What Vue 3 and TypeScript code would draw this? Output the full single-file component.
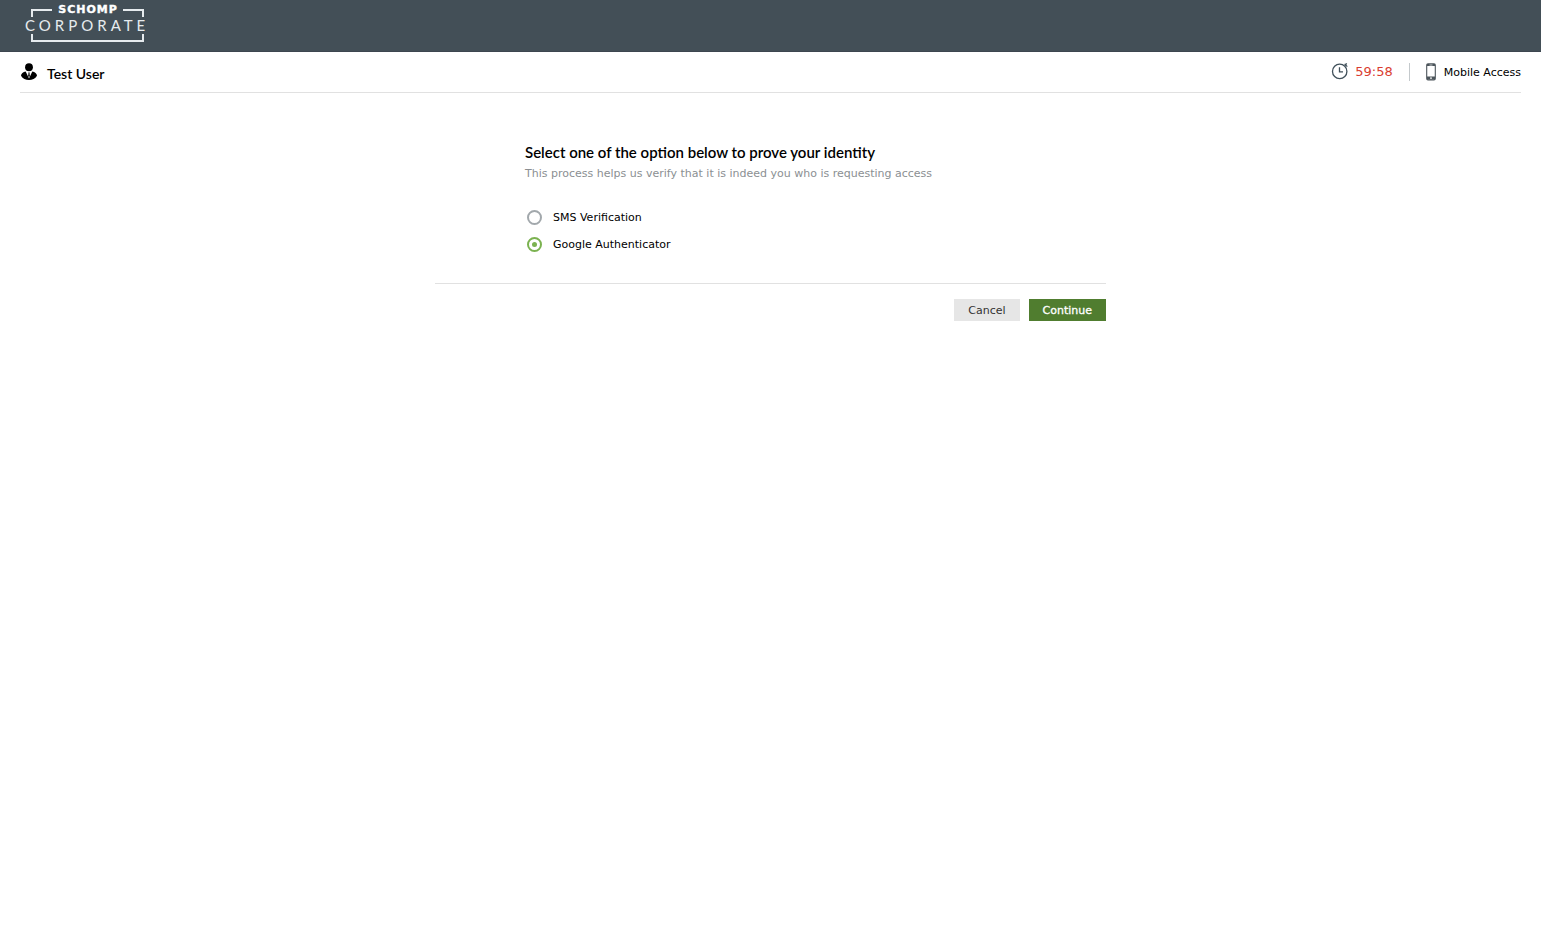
<script setup lang="ts">
import { ref } from 'vue'

interface Method {
  id: string
  label: string
}

const methods: Method[] = [
  { id: 'sms', label: 'SMS Verification' },
  { id: 'google', label: 'Google Authenticator' },
]
const selected = ref('google')
const remaining = ref('59:58')
</script>

<template>
  <div class="page">
    <header class="brand-bar">
      <svg class="logo" viewBox="0 0 126 38" role="img" aria-label="Schomp Corporate">
        <path d="M8 12V5H28M99 5H119V12M8 29V36H119V29" fill="none" stroke="#e6ebee" stroke-width="2" />
        <text class="logo-top" x="64" y="8" text-anchor="middle">SCHOMP</text>
        <text class="logo-name" x="1" y="26">CORPORATE</text>
      </svg>
    </header>

    <div class="user-bar">
      <div class="user">
        <svg class="user-icon" viewBox="0 0 18 18" aria-hidden="true">
          <ellipse cx="9" cy="4.2" rx="3.9" ry="4" />
          <path d="M1 12.700C1 10.400 3.200 9.100 5.700 8.500L9 15.500 12.300 8.500C14.800 9.100 17 10.400 17 12.700 15.200 15.600 12.400 17 9 17S2.800 15.600 1 12.700Z" />
          <path d="M8.200 9.500H9.800L9.500 10.700 9.900 12.700 9 14.500 8.100 12.700 8.500 10.700Z" />
        </svg>
        <span class="user-name">Test User</span>
      </div>
      <div class="tools">
        <div class="timer">
          <svg class="clock-icon" viewBox="0 0 18 18" aria-hidden="true" fill="none" stroke="#40505a">
            <circle cx="8.700" cy="8.400" r="7.200" stroke-width="1.300" />
            <path d="M8.500 4.300V8.900H12" stroke-width="1.300" />
            <path d="M13.600 0.900L16.300 3.600M15.700 0.400L14 2.500" stroke-width="1.300" />
          </svg>
          <span>{{ remaining }}</span>
        </div>
        <a class="mobile" href="#">
          <svg class="phone-icon" viewBox="0 0 10 18" aria-hidden="true">
            <rect x="0.700" y="0.700" width="8.600" height="16.200" rx="1.300" fill="#fff" stroke="#4c555b" stroke-width="1.100" />
            <path d="M1 1H9V3H1ZM1 13.600H9V16.600H1Z" fill="#4c555b" />
            <path d="M3.500 2H6.500" stroke="#fff" stroke-width="0.700" />
            <circle cx="5" cy="15.100" r="0.900" fill="#fff" />
          </svg>
          <span class="text">Mobile Access</span>
        </a>
      </div>
    </div>

    <main class="verify">
      <form @submit.prevent>
        <div class="content">
          <h1>Select one of the option below to prove your identity</h1>
          <p>This process helps us verify that it is indeed you who is requesting access</p>
          <div class="methods" role="radiogroup" aria-label="Verification method">
            <label v-for="m in methods" :key="m.id" class="method" :for="m.id">
              <input :id="m.id" v-model="selected" type="radio" name="method" :value="m.id" />
              <span class="text">{{ m.label }}</span>
            </label>
          </div>
        </div>
        <div class="actions">
          <button type="button" class="cancel">Cancel</button>
          <button type="submit" class="continue">Continue</button>
        </div>
      </form>
    </main>
  </div>
</template>

<style>
body {
  background: #fff;
}
</style>

<style scoped>
.page {
  font-family: Verdana, "DejaVu Sans", sans-serif;
  font-size: 11px;
  line-height: 16px;
  color: #000;
}
.brand-bar {
  box-sizing: border-box;
  height: 52px;
  padding: 5px 24px;
  background: #434f57;
  border-bottom: 1px solid #3d464f;
}
.logo {
  display: block;
  width: 126px;
  height: 38px;
  overflow: visible;
}
.logo-top {
  font: 700 11px "DejaVu Sans", sans-serif;
  letter-spacing: 1px;
  fill: #fff;
  stroke: #fff;
  stroke-width: 0.4px;
}
.logo-name {
  font: 400 15px Lato, sans-serif;
  letter-spacing: 4px;
  fill: #e6ebee;
}
.user-bar {
  display: flex;
  justify-content: space-between;
  align-items: center;
  box-sizing: border-box;
  height: 41px;
  margin: 0 20px;
  border-bottom: 1px solid #e1e1e1;
}
.user,
.tools,
.timer,
.mobile {
  display: flex;
  align-items: center;
}
.user-icon {
  width: 18px;
  height: 18px;
  margin-right: 9px;
}
.user-name {
  padding-top: 4px;
  font: 600 14px/18px Lato, sans-serif;
}
.text {
  padding-top: 2px;
}
.timer {
  gap: 6px;
  height: 18px;
  padding-right: 16px;
  border-right: 1px solid #c4c9cc;
  color: #d93c2f;
  font-size: 13px;
}
.clock-icon {
  width: 18px;
  height: 18px;
}
.mobile {
  gap: 8px;
  padding-left: 16px;
  color: #000;
  text-decoration: none;
}
.phone-icon {
  width: 10px;
  height: 18px;
}
.verify {
  max-width: 671px;
  margin: 49px auto 0;
}
.content {
  padding: 0 90px 29px;
  border-bottom: 1px solid #e1e1e1;
}
h1 {
  margin: 0;
  font: 600 15px/20px Lato, sans-serif;
}
p {
  margin: 4px 0 0;
  color: #8b8f92;
}
.methods {
  display: flex;
  flex-direction: column;
  gap: 7px;
  padding-top: 25px;
}
.method {
  display: flex;
  align-items: center;
  gap: 11px;
  height: 20px;
}
input {
  display: grid;
  place-content: center;
  box-sizing: border-box;
  width: 15px;
  height: 15px;
  margin: 0 0 0 2px;
  appearance: none;
  border: 2px solid #a2a8ac;
  border-radius: 50%;
  background: #fff;
}
input:checked {
  border-color: #7bb250;
}
input:checked::before {
  content: "";
  width: 5px;
  height: 5px;
  border-radius: 50%;
  background: #7bb250;
}
.actions {
  display: flex;
  justify-content: flex-end;
  gap: 9px;
  padding-top: 15px;
}
button {
  height: 22px;
  padding: 2px 14px 0;
  border: 0;
  font: inherit;
}
.cancel {
  background: #e6e6e6;
  color: #333;
}
.continue {
  background: #507d2f;
  color: #fff;
  -webkit-text-stroke: 0.3px #fff;
}
</style>
